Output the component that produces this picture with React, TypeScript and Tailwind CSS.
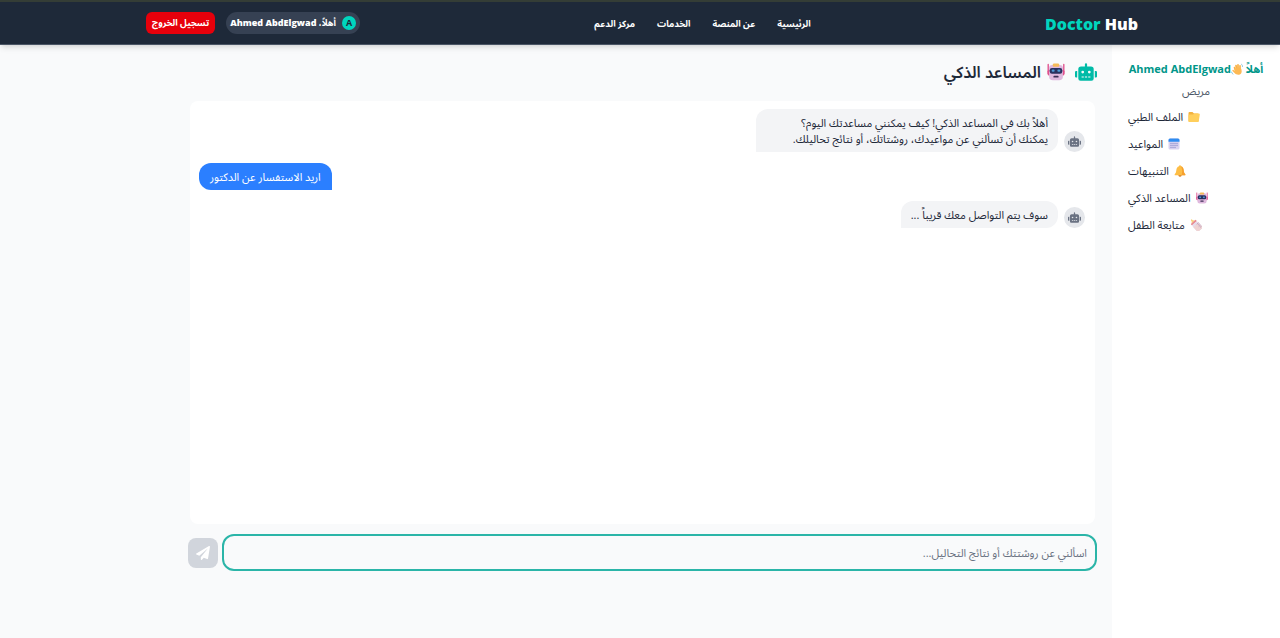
import { useState, type FormEvent, type ReactNode } from "react";
import { FaPaperPlane, FaRobot } from "react-icons/fa";

type EmojiProps = { className?: string };

function RobotEmoji({ className = "size-3" }: EmojiProps) {
  return (
    <svg viewBox="0 0 24 24" className={className} aria-hidden="true">
      <path d="M1.600 2v12M22.400 2v12" stroke="#e0508c" strokeWidth="1.800" strokeLinecap="round" />
      <rect x="0.800" y="9" width="22.400" height="7.500" rx="2" fill="#e0508c" />
      <path d="M2.800 6.500a4 4 0 0 1 4-4h10.400a4 4 0 0 1 4 4V18a5 5 0 0 1-5 5H7.800a5 5 0 0 1-5-5z" fill="#dfb9de" />
      <path d="M7.500 2.500a2 2 0 0 1 2-1.700h5a2 2 0 0 1 2 1.700l-.8 2.500H8.300z" fill="#f5ba59" />
      <rect x="3.600" y="6.500" width="16.800" height="7.800" rx="3" fill="#29315f" />
      <rect x="6.200" y="8.800" width="4" height="3" rx="1.500" fill="#4f9bd8" />
      <rect x="13.800" y="8.800" width="4" height="3" rx="1.500" fill="#4f9bd8" />
      <rect x="8.500" y="17" width="7" height="2.400" rx="1.200" fill="#3c2f55" />
    </svg>
  );
}

function FolderEmoji() {
  return (
    <svg viewBox="0 0 24 24" className="size-3" aria-hidden="true">
      <path d="M1 4a2 2 0 0 1 2-2h6l3 3h7a2 2 0 0 1 2 2v13a2 2 0 0 1-2 2H3a2 2 0 0 1-2-2z" fill="#f3b23e" />
      <path d="M1 9a2 2 0 0 1 2-2h7l3-2h8.500a2 2 0 0 1 2 2.400l-2 13a2 2 0 0 1-2 1.600H3a2 2 0 0 1-2-2z" fill="#ffcf5c" />
    </svg>
  );
}

function CalendarEmoji() {
  return (
    <svg viewBox="0 0 24 24" className="size-3" aria-hidden="true">
      <rect x="1" y="1" width="22" height="22" rx="3" fill="#d9d2f0" />
      <path d="M1 7.500V4a3 3 0 0 1 3-3h16a3 3 0 0 1 3 3v3.500z" fill="#2f8cf0" />
      <g fill="#8d8fcb">
        <circle cx="6" cy="11" r="1.300" /><circle cx="10" cy="11" r="1.300" /><circle cx="14" cy="11" r="1.300" /><circle cx="18" cy="11" r="1.300" />
        <circle cx="6" cy="15" r="1.300" /><circle cx="10" cy="15" r="1.300" /><circle cx="14" cy="15" r="1.300" /><circle cx="18" cy="15" r="1.300" />
        <circle cx="6" cy="19" r="1.300" /><circle cx="10" cy="19" r="1.300" /><circle cx="14" cy="19" r="1.300" />
      </g>
    </svg>
  );
}

function BellEmoji() {
  return (
    <svg viewBox="0 0 24 24" className="size-3" aria-hidden="true">
      <circle cx="12" cy="20.500" r="3" fill="#d9822b" />
      <path d="M12 0.500a2 2 0 0 1 2 2c3.500 1 5 4 5.300 7.500.3 4 1 6 3.200 8.500.7 1 .2 2-1 2h-19c-1.200 0-1.700-1-1-2C3.700 16 4.400 14 4.700 10 5 6.500 6.500 3.500 10 2.500a2 2 0 0 1 2-2z" fill="#fdbd45" />
      <path d="M14 2.500c3.500 1 5 4 5.300 7.500.3 4 1 6 3.200 8.500.7 1 .2 2-1 2H15c2-6 2-12-1-18z" fill="#f6a02f" />
    </svg>
  );
}

function BottleEmoji() {
  return (
    <svg viewBox="0 0 24 24" className="size-3" aria-hidden="true">
      <g transform="rotate(-42 12 12)">
        <path d="M10.500-1a1.500 1.500 0 0 1 3 0v1.500l3 3.500h-9l3-3.500z" fill="#f7d27c" />
        <rect x="5.500" y="3.500" width="13" height="4" rx="1" fill="#e98a92" />
        <rect x="5" y="7" width="14" height="18" rx="3.500" fill="#e6dbe9" />
        <path d="M5 12h14v9.500a3.500 3.500 0 0 1-3.500 3.500h-7A3.500 3.500 0 0 1 5 21.500z" fill="#efd3d3" />
        <path d="M14 12h5M15 15h4M14 18h5M15 21h4" stroke="#a886b0" strokeWidth="1.200" />
      </g>
    </svg>
  );
}

function WaveEmoji() {
  return (
    <svg viewBox="0 0 24 24" className="inline size-3 align-[-2px]" aria-hidden="true">
      <g fill="none" stroke="#f9b248" strokeWidth="3.400" strokeLinecap="round">
        <path d="M9 15 7 9" /><path d="M11 11 10 5" /><path d="M14 10V3.500" /><path d="M18 12V5.500" />
      </g>
      <path d="M7 12c3-3 8-4 12.500-2 3 5 2.500 11-2 13-4 1.500-8-.5-10.500-3l-4-4c-1-1.500.5-3 2-2l3 2z" fill="#fdb954" />
      <path d="M21 2.500c1.300 1 2 2.500 2 4.500M1 18c.5 2 1.500 3.500 3 4.500" fill="none" stroke="#55aacb" strokeWidth="1.300" strokeLinecap="round" />
    </svg>
  );
}

const navLinks = ["الرئيسية", "عن المنصة", "الخدمات", "مركز الدعم"];

const menu: { label: string; icon: ReactNode }[] = [
  { label: "الملف الطبي", icon: <FolderEmoji /> },
  { label: "المواعيد", icon: <CalendarEmoji /> },
  { label: "التنبيهات", icon: <BellEmoji /> },
  { label: "المساعد الذكي", icon: <RobotEmoji /> },
  { label: "متابعة الطفل", icon: <BottleEmoji /> },
];

type Message = { from: "bot" | "user"; lines: string[] };

const initialMessages: Message[] = [
  {
    from: "bot",
    lines: [
      "أهلاً بك في المساعد الذكي! كيف يمكنني مساعدتك اليوم؟",
      "يمكنك أن تسألني عن مواعيدك، روشتاتك، أو نتائج تحاليلك.",
    ],
  },
  { from: "user", lines: ["اريد الاستفسار عن الدكتور"] },
  { from: "bot", lines: ["سوف يتم التواصل معك قريباً ..."] },
];

function ChatMessage({ message }: { message: Message }) {
  if (message.from === "user") {
    return (
      <li className="flex justify-end">
        <div className="rounded-xl rounded-br-none bg-[#2b7fff] px-[11px] pt-1.5 pb-[5px] text-white">{message.lines[0]}</div>
      </li>
    );
  }
  const width = message.lines.length > 1 ? "w-[302px]" : "max-w-[302px]";
  return (
    <li className="flex items-end gap-1.5">
      <span className="flex size-[21px] shrink-0 items-center justify-center rounded-full bg-gray-200 text-gray-500">
        <FaRobot className="size-[13px]" />
      </span>
      <div className={`${width} rounded-xl rounded-bl-none bg-gray-100 px-2.5 pt-1.5 pb-[5px] text-gray-800`}>
        {message.lines.map((line) => (
          <p key={line}>{line}</p>
        ))}
      </div>
    </li>
  );
}

export default function App() {
  const [messages, setMessages] = useState(initialMessages);
  const [draft, setDraft] = useState("");

  function send(event: FormEvent) {
    event.preventDefault();
    if (!draft.trim()) return;
    setMessages([...messages, { from: "user", lines: [draft] }]);
    setDraft("");
  }

  return (
    <div
      dir="rtl"
      className="flex min-h-screen flex-col bg-gray-50 font-['Open_Sans','Noto_Sans','Noto_Sans_Arabic','DejaVu_Sans',sans-serif] text-[11px] leading-4 text-gray-800"
    >
      <header className="relative z-10 flex h-[45px] items-center justify-between border-t-2 border-b border-t-[#343d36] border-b-gray-600 bg-gray-800 ps-[142px] pe-[146px] text-white shadow-md">
        <a href="#home" dir="ltr" className="pt-0.5 text-base font-extrabold">
          <span className="text-[#00d5be]">Doctor</span> Hub
        </a>
        <nav className="flex gap-[22px] pt-px text-[9px] font-bold">
          {navLinks.map((label) => (
            <a key={label} href="#section">{label}</a>
          ))}
        </nav>
        <div className="flex items-center gap-[11px] text-[9px] font-bold">
          <div className="flex h-[22px] items-center gap-1.5 rounded-full bg-gray-700 px-1">
            <span className="flex size-3.5 items-center justify-center rounded-full bg-[#00d5be] text-gray-800">A</span>
            <span>أهلاً، <bdi className="font-extrabold">Ahmed AbdElgwad</bdi></span>
          </div>
          <button type="button" className="h-[22px] rounded-md bg-[#e7000b] px-1.5">تسجيل الخروج</button>
        </div>
      </header>

      <div className="flex grow">
        <aside className="w-[168px] shrink-0 bg-white px-4 pt-4">
          <div className="text-center">
            <p className="font-bold whitespace-nowrap text-[#009689]">
              أهلاً <WaveEmoji /><bdi>Ahmed AbdElgwad</bdi>
            </p>
            <p className="mt-1.5 text-gray-600">مريض</p>
          </div>
          <nav className="mt-2.5 flex flex-col items-end gap-[11px]">
            {menu.map((item) => (
              <a key={item.label} href="#panel" className="flex items-center gap-[5px]">
                {item.icon}
                <span>{item.label}</span>
              </a>
            ))}
          </nav>
        </aside>

        <main className="flex max-w-[939px] grow flex-col px-[15px] pt-[15px]">
          <h1 className="flex items-center gap-2.5 text-base leading-6 font-semibold">
            <FaRobot className="size-[22px] text-[#00bba7]" />
            <span className="flex items-center gap-1.5">
              <RobotEmoji className="size-[18px]" />
              المساعد الذكي
            </span>
          </h1>
          <ul className="mx-0.5 mt-[17px] flex h-[423px] flex-col gap-[11px] overflow-y-auto rounded-lg bg-white ps-2.5 pe-[9px] pt-2">
            {messages.map((message, index) => (
              <ChatMessage key={index} message={message} />
            ))}
          </ul>
          <form onSubmit={send} className="mt-2.5 flex items-center gap-1">
            <input
              value={draft}
              onChange={(event) => setDraft(event.target.value)}
              aria-label="رسالتك"
              placeholder="اسألني عن روشتتك أو نتائج التحاليل..."
              className="h-[37px] min-w-0 grow rounded-xl border-2 border-[#2bb5a8] bg-transparent px-2 placeholder:text-gray-500 focus:outline-none"
            />
            <button type="submit" aria-label="إرسال" className="flex size-[30px] shrink-0 items-center justify-center rounded-lg bg-gray-300 text-white">
              <FaPaperPlane className="size-3.5" />
            </button>
          </form>
        </main>
      </div>
    </div>
  );
}
